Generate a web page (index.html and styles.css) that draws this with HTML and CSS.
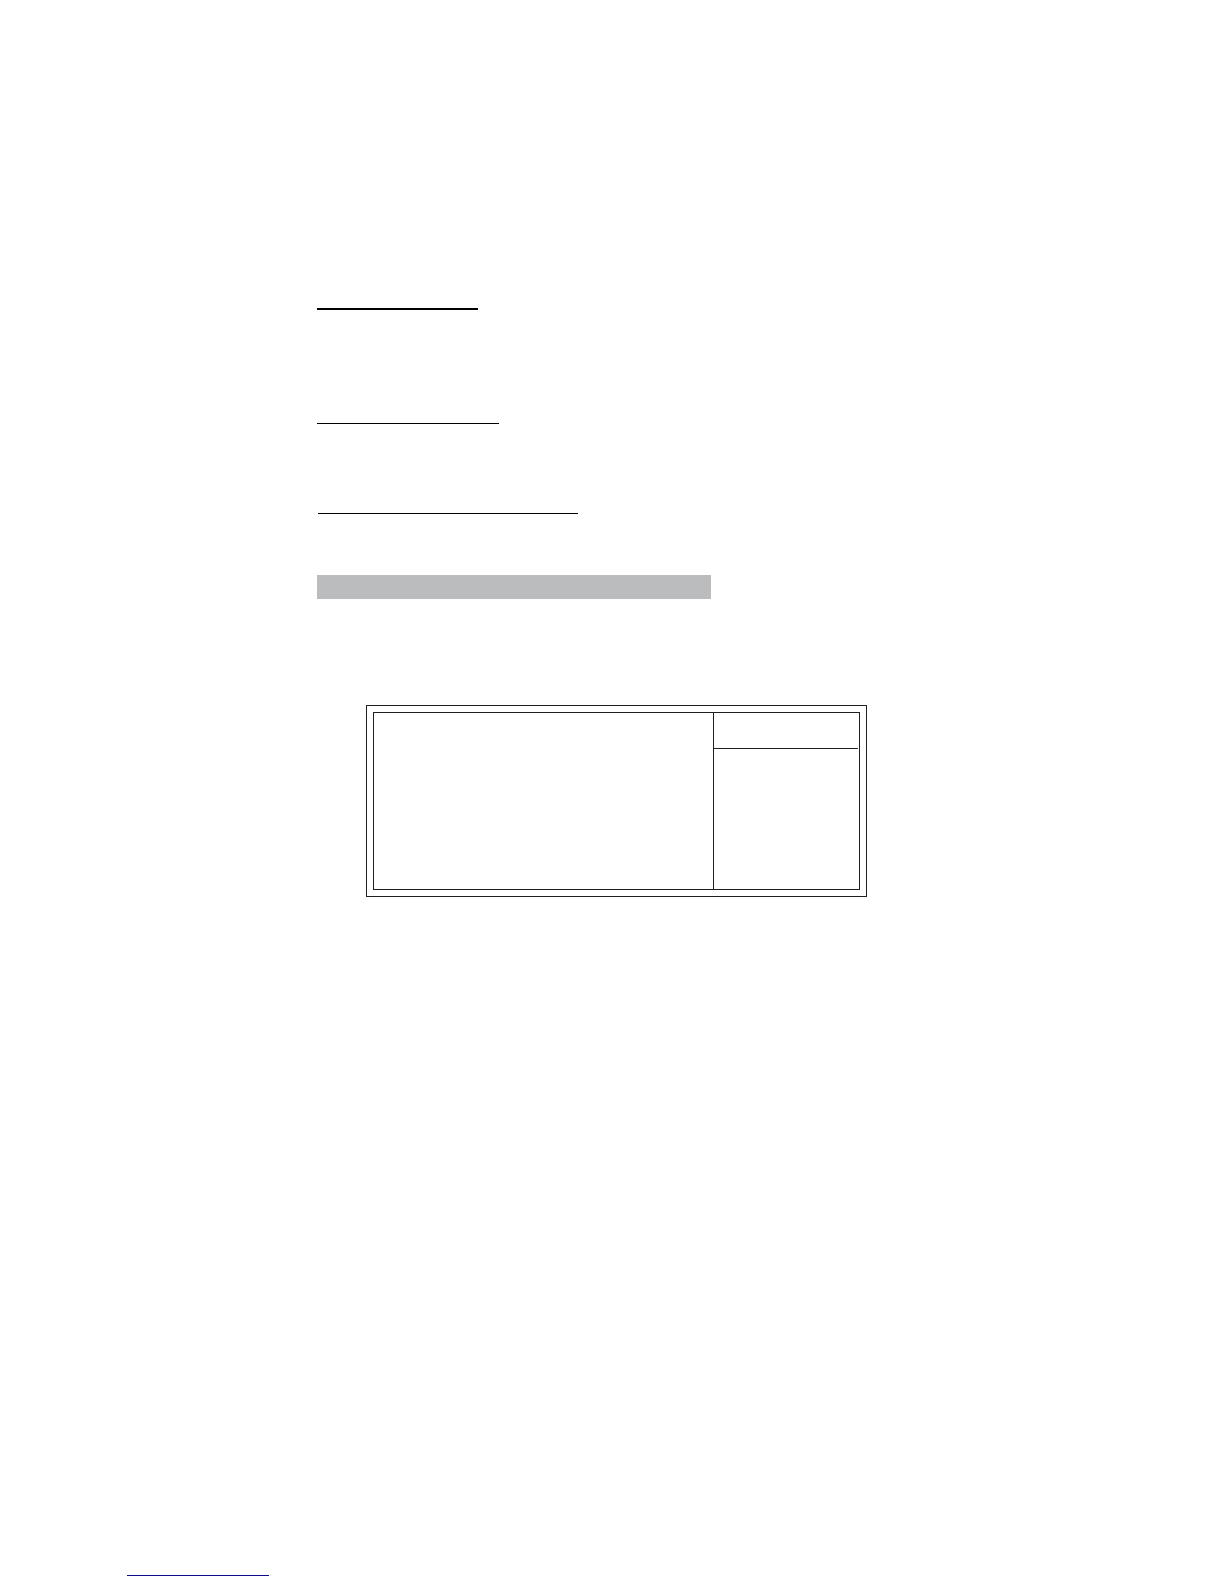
FILE: index.html
```html
<!DOCTYPE html>
<html lang="en">
<head>
  <meta charset="UTF-8">
  <meta name="viewport" content="width=device-width, initial-scale=1.0">
  <title>Page</title>
  <link rel="stylesheet" href="styles.css">
</head>
<body>
  <main class="content">
    <hr class="rule rule-title">
    <hr class="rule rule-section">
    <hr class="rule rule-subsection">
    <div class="band"></div>
    <div class="frame">
      <div class="panel">
        <div class="panel-main"></div>
        <div class="panel-side">
          <div class="panel-side-header"></div>
        </div>
      </div>
    </div>
  </main>
  <footer class="footer">
    <hr class="rule rule-footer">
  </footer>
</body>
</html>
```

FILE: styles.css
```css
* {
  box-sizing: border-box;
}

body {
  margin: 0;
  min-height: 100vh;
  display: flex;
  flex-direction: column;
  justify-content: space-between;
  background: #fff;
}

.content {
  padding: 308px 24px 0 317px;
}

/* underlines */
.rule {
  margin: 0;
  border: 0;
  height: 1px;
  max-width: 100%;
  background: #000;
}

.rule-title {
  width: 161px;
  height: 2px;
}

.rule-section {
  width: 182px;
  margin-top: 113px;
}

.rule-subsection {
  width: 260px;
  margin-top: 89px;
  margin-left: 1px;
}

.band {
  max-width: 394px;
  height: 24px;
  margin-top: 61px;
  background: #bbbcbe;
}

/* double frame with two columns */
.frame {
  max-width: 501px;
  margin-top: 106px;
  margin-left: 49px;
  padding: 6px;
  border: 1px solid #231f20;
}

.panel {
  display: grid;
  grid-template-columns: 1fr 146px;
  min-height: 178px;
  border: 1px solid #231f20;
}

.panel-side {
  border-left: 1px solid #231f20;
}

.panel-side-header {
  height: 36px;
  margin-right: 1px;
  border-bottom: 1px solid #231f20;
}

.footer {
  padding: 24px 24px 8px 127px;
}

.rule-footer {
  width: 142px;
  background: #0c0c8c;
}
```
